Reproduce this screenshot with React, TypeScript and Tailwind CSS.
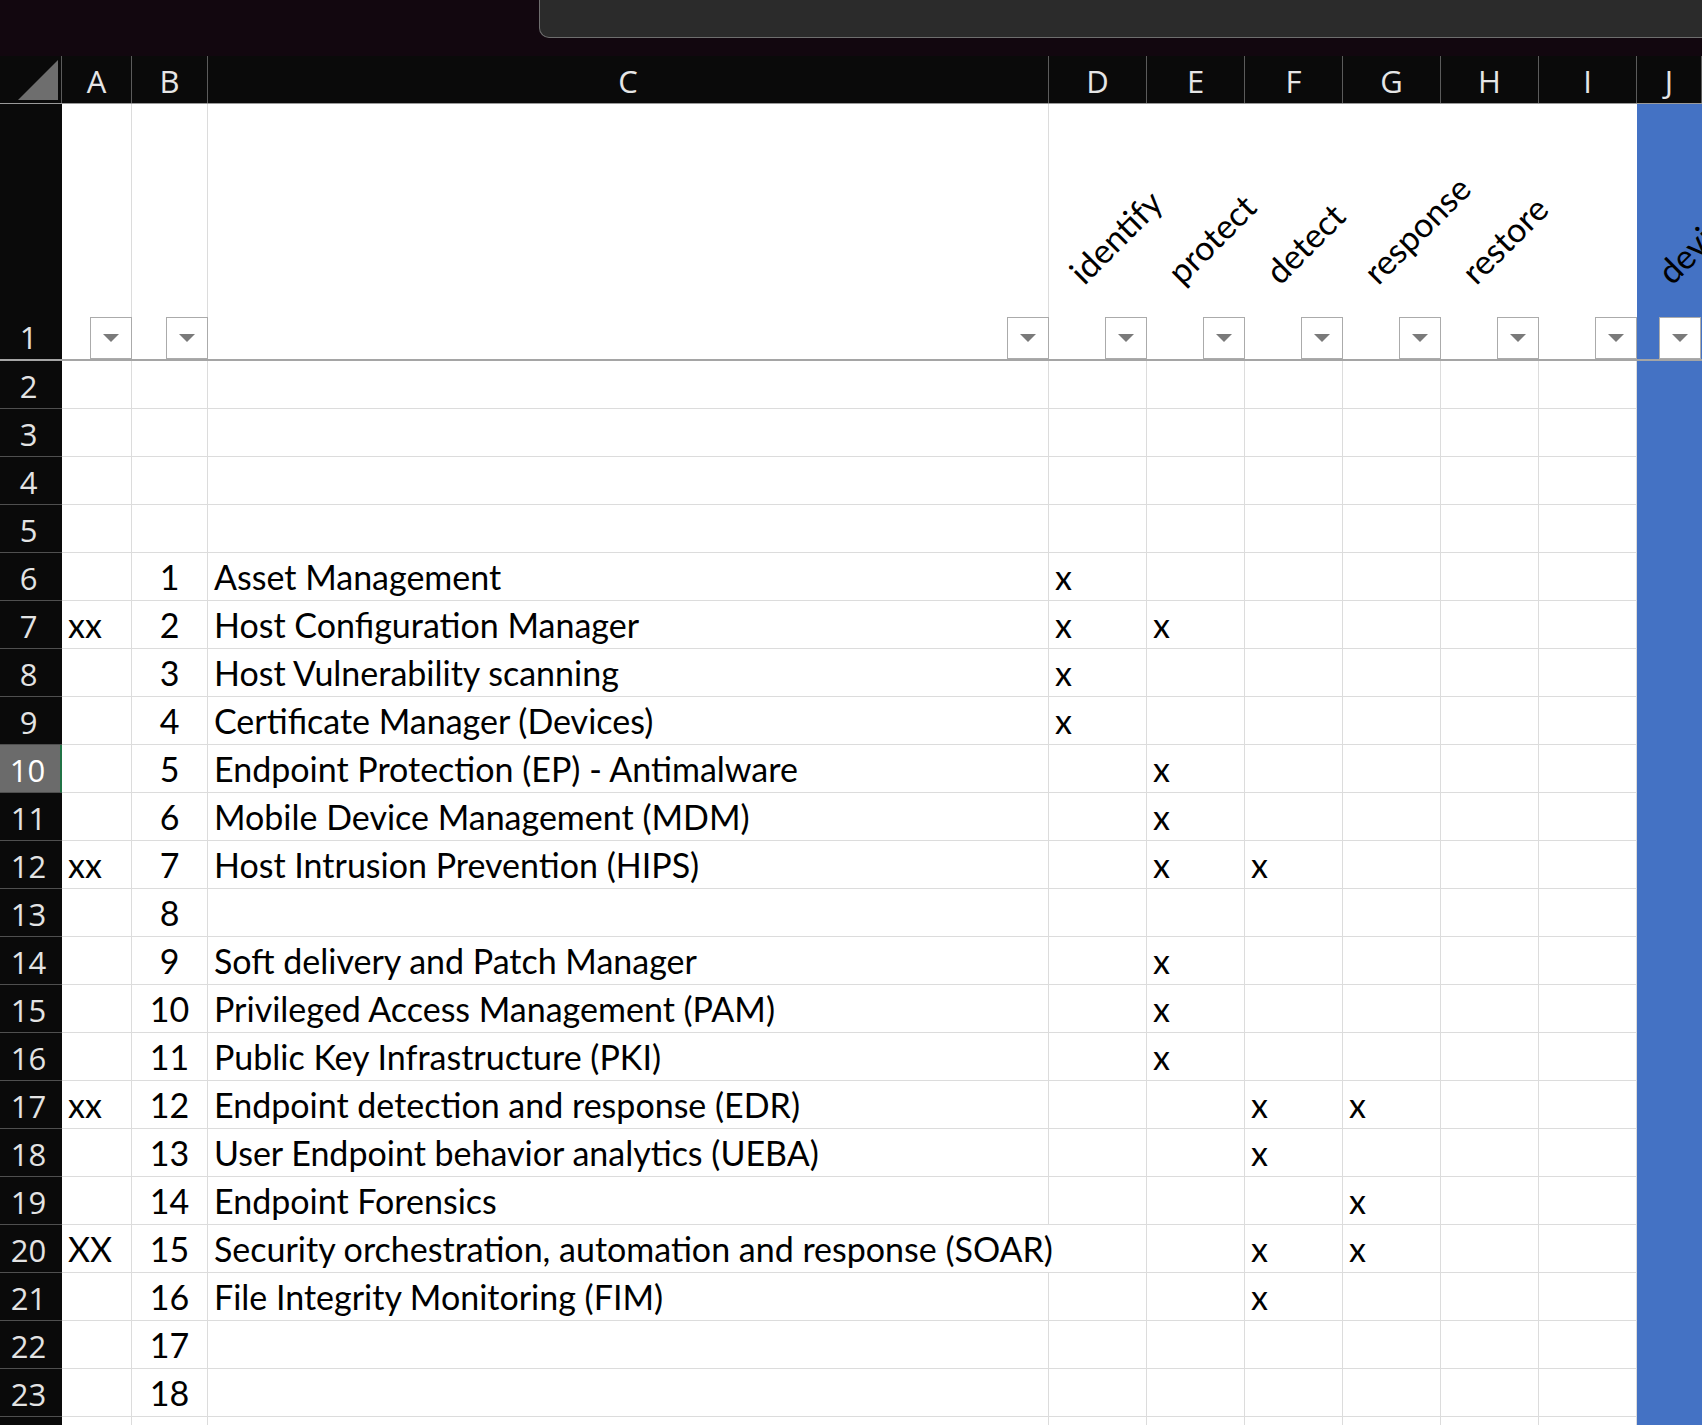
import React from 'react'

type DataRow = {
  n: number
  a?: string
  b?: number
  c?: string
  marks?: string[]
  hideNumbers?: boolean
}

const MARK_COLS = ['D', 'E', 'F', 'G', 'H', 'I']

const ROWS: DataRow[] = [
  { n: 2 },
  { n: 3 },
  { n: 4 },
  { n: 5 },
  { n: 6, b: 1, c: 'Asset Management', marks: ['D'] },
  { n: 7, a: 'xx', b: 2, c: 'Host Configuration Manager', marks: ['D', 'E'] },
  { n: 8, b: 3, c: 'Host Vulnerability scanning', marks: ['D'] },
  { n: 9, b: 4, c: 'Certificate Manager (Devices)', marks: ['D'] },
  { n: 10, b: 5, c: 'Endpoint Protection (EP) - Antimalware', marks: ['E'] },
  { n: 11, b: 6, c: 'Mobile Device Management (MDM)', marks: ['E'] },
  { n: 12, a: 'xx', b: 7, c: 'Host Intrusion Prevention (HIPS)', marks: ['E', 'F'] },
  { n: 13, b: 8 },
  { n: 14, b: 9, c: 'Soft delivery and Patch Manager', marks: ['E'] },
  { n: 15, b: 10, c: 'Privileged Access Management (PAM)', marks: ['E'] },
  { n: 16, b: 11, c: 'Public Key Infrastructure (PKI)', marks: ['E'] },
  { n: 17, a: 'xx', b: 12, c: 'Endpoint detection and response (EDR)', marks: ['F', 'G'] },
  { n: 18, b: 13, c: 'User Endpoint behavior analytics (UEBA)', marks: ['F'] },
  { n: 19, b: 14, c: 'Endpoint Forensics', marks: ['G'] },
  { n: 20, a: 'XX', b: 15, c: 'Security orchestration, automation and response (SOAR)', marks: ['F', 'G'] },
  { n: 21, b: 16, c: 'File Integrity Monitoring (FIM)', marks: ['F'] },
  { n: 22, b: 17 },
  { n: 23, b: 18 },
  // row 24 only peeks in at the bottom edge
  { n: 24, hideNumbers: true },
]

const HEADINGS: Record<string, string> = {
  D: 'identify',
  E: 'protect',
  F: 'detect',
  G: 'response',
  H: 'restore',
}

const cellFont = "font-['Lato',sans-serif] text-[34px] leading-none text-black"
const headFont = "font-['Open_Sans',sans-serif] text-[31px] leading-none"

function FilterButton() {
  return (
    <div className="flex h-[42px] w-[42px] items-center justify-center border border-[#ababab] bg-white">
      <svg width="16" height="8" viewBox="0 0 16 8">
        <path d="M0 0h16L8 8z" fill="#7a7a7a" />
      </svg>
    </div>
  )
}

function Rotated({ text }: { text: string }) {
  return (
    <span
      className={`absolute bottom-[70px] left-[38px] origin-bottom-left -rotate-45 whitespace-nowrap ${cellFont}`}
    >
      {text}
    </span>
  )
}

function RowHead({ n, selected, hide }: { n: number; selected?: boolean; hide?: boolean }) {
  return (
    <div
      className={`flex h-full w-[62px] shrink-0 items-end justify-center border-b border-[#4f4f4f] pb-[6px] pr-[5px] ${headFont} ${
        selected ? 'border-r-2 border-r-[#217346] bg-[#6b6b6b] text-white' : 'bg-[#0a0a0a] text-[#e3e3e3]'
      }`}
    >
      {hide ? '' : n}
    </div>
  )
}

function Cell({
  w,
  children,
  center,
  noRight,
}: {
  w: string
  children?: React.ReactNode
  center?: boolean
  noRight?: boolean
}) {
  return (
    <div
      className={`flex h-full shrink-0 items-end whitespace-nowrap border-b border-[#dcdcdc] px-[6px] pb-[6px] ${w} ${
        noRight ? '' : 'border-r'
      } ${center ? 'justify-center' : ''}`}
    >
      <span className={cellFont}>{children}</span>
    </div>
  )
}

export default function App() {
  return (
    <div className="h-[1425px] w-[1702px] overflow-hidden bg-white">
      {/* Title strip */}
      <div className="flex h-[56px] bg-[#12070f]">
        <div className="w-[539px] shrink-0" />
        <div className="h-[38px] flex-1 rounded-bl-[10px] border-b border-l border-[#6e6e6e] bg-[#2b2b2b]" />
      </div>

      {/* Column headers */}
      <div className="flex h-[48px] border-b border-[#9a9a9a] bg-[#0a0a0a] text-[#e6e6e6]">
        <div className="h-full w-[62px] shrink-0 border-r border-[#5b5b5b]">
          <svg width="61" height="47" viewBox="0 0 61 47">
            <path d="M58 4V44H18z" fill="#6e6e6e" />
          </svg>
        </div>
        {[
          ['A', 'w-[70px]'],
          ['B', 'w-[76px]'],
          ['C', 'w-[841px]'],
          ['D', 'w-[98px]'],
          ['E', 'w-[98px]'],
          ['F', 'w-[98px]'],
          ['G', 'w-[98px]'],
          ['H', 'w-[98px]'],
          ['I', 'w-[98px]'],
          ['J', 'w-[65px]'],
        ].map(([l, w]) => (
          <div
            key={l}
            className={`flex h-full shrink-0 items-end justify-center border-r border-[#5b5b5b] pb-[6px] ${w} ${headFont}`}
          >
            {l}
          </div>
        ))}
      </div>

      {/* Row 1: filter header */}
      <div className="flex h-[257px] border-b-2 border-[#a5a5a5]">
        <div className={`flex h-full w-[62px] shrink-0 items-end justify-center bg-[#0a0a0a] pb-[6px] pr-[5px] text-[#e3e3e3] ${headFont}`}>
          1
        </div>
        <div className="flex h-full w-[70px] shrink-0 items-end justify-end border-r border-[#dcdcdc]">
          <div className="-mr-px">
            <FilterButton />
          </div>
        </div>
        <div className="flex h-full w-[76px] shrink-0 items-end justify-end border-r border-[#dcdcdc]">
          <div className="-mr-px">
            <FilterButton />
          </div>
        </div>
        <div className="flex h-full w-[841px] shrink-0 items-end justify-end border-r border-[#dcdcdc]">
          <div className="-mr-px">
            <FilterButton />
          </div>
        </div>
        {MARK_COLS.map((col) => (
          <div key={col} className="relative flex h-full w-[98px] shrink-0 items-end justify-end">
            {HEADINGS[col] && <Rotated text={HEADINGS[col]} />}
            <FilterButton />
          </div>
        ))}
        <div className="relative flex h-full w-[65px] shrink-0 items-end justify-end bg-[#4472c4] pr-[1px]">
          <Rotated text="devices" />
          <FilterButton />
        </div>
      </div>

      {/* Data rows */}
      {ROWS.map((r) => {
        const overflow = r.n === 20
        return (
          <div key={r.n} className="flex h-[48px]">
            <RowHead n={r.n} selected={r.n === 10} hide={r.hideNumbers} />
            <Cell w="w-[70px]">{r.a}</Cell>
            <Cell w="w-[76px]" center>
              {r.b}
            </Cell>
            <Cell w="w-[841px]" noRight={overflow}>
              {r.c}
            </Cell>
            {MARK_COLS.map((col) => (
              <Cell key={col} w="w-[98px]">
                {r.marks?.includes(col) ? 'x' : ''}
              </Cell>
            ))}
            <div className="h-full w-[65px] shrink-0 bg-[#4472c4]" />
          </div>
        )
      })}
    </div>
  )
}
